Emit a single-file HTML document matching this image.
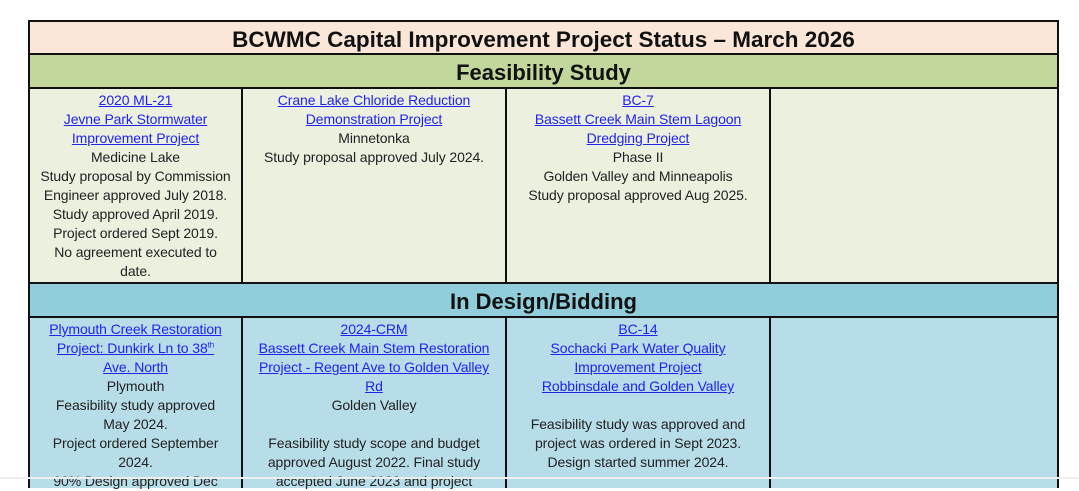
<!DOCTYPE html>
<html><head><style>
html,body{margin:0;padding:0;width:1079px;height:479px;overflow:hidden;background:#fff;font-family:"Liberation Sans",sans-serif;}
.r{position:absolute;left:28px;width:1031px;box-sizing:border-box;border-left:2px solid #111;border-right:2px solid #111;border-bottom:2px solid #111;}
.h{text-align:center;font-weight:bold;color:#111;}
.c{position:absolute;top:0;bottom:0;text-align:center;font-size:14px;line-height:19px;color:#222;padding-top:2px;letter-spacing:-0.1px;white-space:nowrap;}
.c a{color:#2222ee;text-decoration:underline;}
.v{position:absolute;top:0;bottom:0;width:2px;background:#111;}
</style></head><body>
<div class="r h" style="top:20px;height:35px;border-top:2px solid #111;background:#fbe6da;font-size:22.5px;line-height:35px;">BCWMC Capital Improvement Project Status – March 2026</div>
<div class="r h" style="top:55px;height:34px;background:#c3d69b;font-size:22px;line-height:35px;">Feasibility Study</div>
<div class="r" style="top:89px;height:195px;background:#ebf1de;">
 <div class="c" style="left:0;width:211px;"><a>2020 ML-21</a><br><a>Jevne Park Stormwater</a><br><a>Improvement Project</a><br>Medicine Lake<br>Study proposal by Commission<br>Engineer approved July 2018.<br>Study approved April 2019.<br>Project ordered Sept 2019.<br>No agreement executed to<br>date.</div>
 <div class="v" style="left:211px"></div>
 <div class="c" style="left:213px;width:262px;"><a>Crane Lake Chloride Reduction</a><br><a>Demonstration Project</a><br>Minnetonka<br>Study proposal approved July 2024.</div>
 <div class="v" style="left:475px"></div>
 <div class="c" style="left:477px;width:262px;"><a>BC-7</a><br><a>Bassett Creek Main Stem Lagoon</a><br><a>Dredging Project</a><br>Phase II<br>Golden Valley and Minneapolis<br>Study proposal approved Aug 2025.</div>
 <div class="v" style="left:739px"></div>
</div>
<div class="r h" style="top:284px;height:34px;background:#92cddc;font-size:22px;line-height:35px;">In Design/Bidding</div>
<div class="r" style="top:318px;height:170px;background:#b7dde8;border-bottom:none;">
 <div class="c" style="left:0;width:211px;"><a>Plymouth Creek Restoration</a><br><a>Project: Dunkirk Ln to 38<sup style="font-size:8px;line-height:0">th</sup></a><br><a>Ave. North</a><br>Plymouth<br>Feasibility study approved<br>May 2024.<br>Project ordered September<br>2024.<br>90% Design approved Dec</div>
 <div class="v" style="left:211px"></div>
 <div class="c" style="left:213px;width:262px;"><a>2024-CRM</a><br><a>Bassett Creek Main Stem Restoration</a><br><a>Project - Regent Ave to Golden Valley</a><br><a>Rd</a><br>Golden Valley<br><br>Feasibility study scope and budget<br>approved August 2022. Final study<br>accepted June 2023 and project</div>
 <div class="v" style="left:475px"></div>
 <div class="c" style="left:477px;width:262px;"><a>BC-14</a><br><a>Sochacki Park Water Quality</a><br><a>Improvement Project</a><br><a>Robbinsdale and Golden Valley</a><br><br>Feasibility study was approved and<br>project was ordered in Sept 2023.<br>Design started summer 2024.</div>
 <div class="v" style="left:739px"></div>
</div>
<div style="position:absolute;left:0;top:477px;width:1079px;height:2px;background:#eee;"></div>
</body></html>
